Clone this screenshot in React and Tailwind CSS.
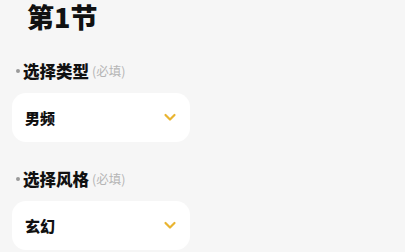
export default function App() {
  const font = { fontFamily: '"Noto Sans CJK SC", "Noto Sans", sans-serif' };
  const Chevron = () => (
    <svg width="14" height="9" viewBox="0 0 14 9" fill="none">
      <path d="M2.5 2l4.5 4.5 4.5-4.5" stroke="#e9b430" strokeWidth="2.2" strokeLinecap="round" strokeLinejoin="round" />
    </svg>
  );
  const Field = ({ label, value }) => (
    <div className="flex flex-col">
      <div className="flex items-center h-[20px]">
        <span className="w-[4px] h-[4px] rounded-full bg-[#9a9a9a] ml-[16px] mr-[3px]" />
        <span className="text-[16.5px] font-black text-[#111] leading-none">{label}</span>
        <span className="text-[12.5px] text-[#b5b5b5] ml-[3px] leading-none">(必填)</span>
      </div>
      <div className="mt-[12px] ml-[12px] w-[178px] h-[49px] bg-white rounded-[14px] flex items-center justify-between pl-[13px] pr-[13px]">
        <span className="text-[15px] font-black text-[#111] leading-none">{value}</span>
        <Chevron />
      </div>
    </div>
  );
  return (
    <div className="w-[405px] h-[252px] bg-[#f6f6f6] overflow-hidden" style={font}>
      <div className="pl-[27px] text-[27px] font-black text-[#111] leading-[34px]">第1节</div>
      <div className="mt-[27px]">
        <Field label="选择类型" value="男频" />
      </div>
      <div className="mt-[27px]">
        <Field label="选择风格" value="玄幻" />
      </div>
    </div>
  );
}
